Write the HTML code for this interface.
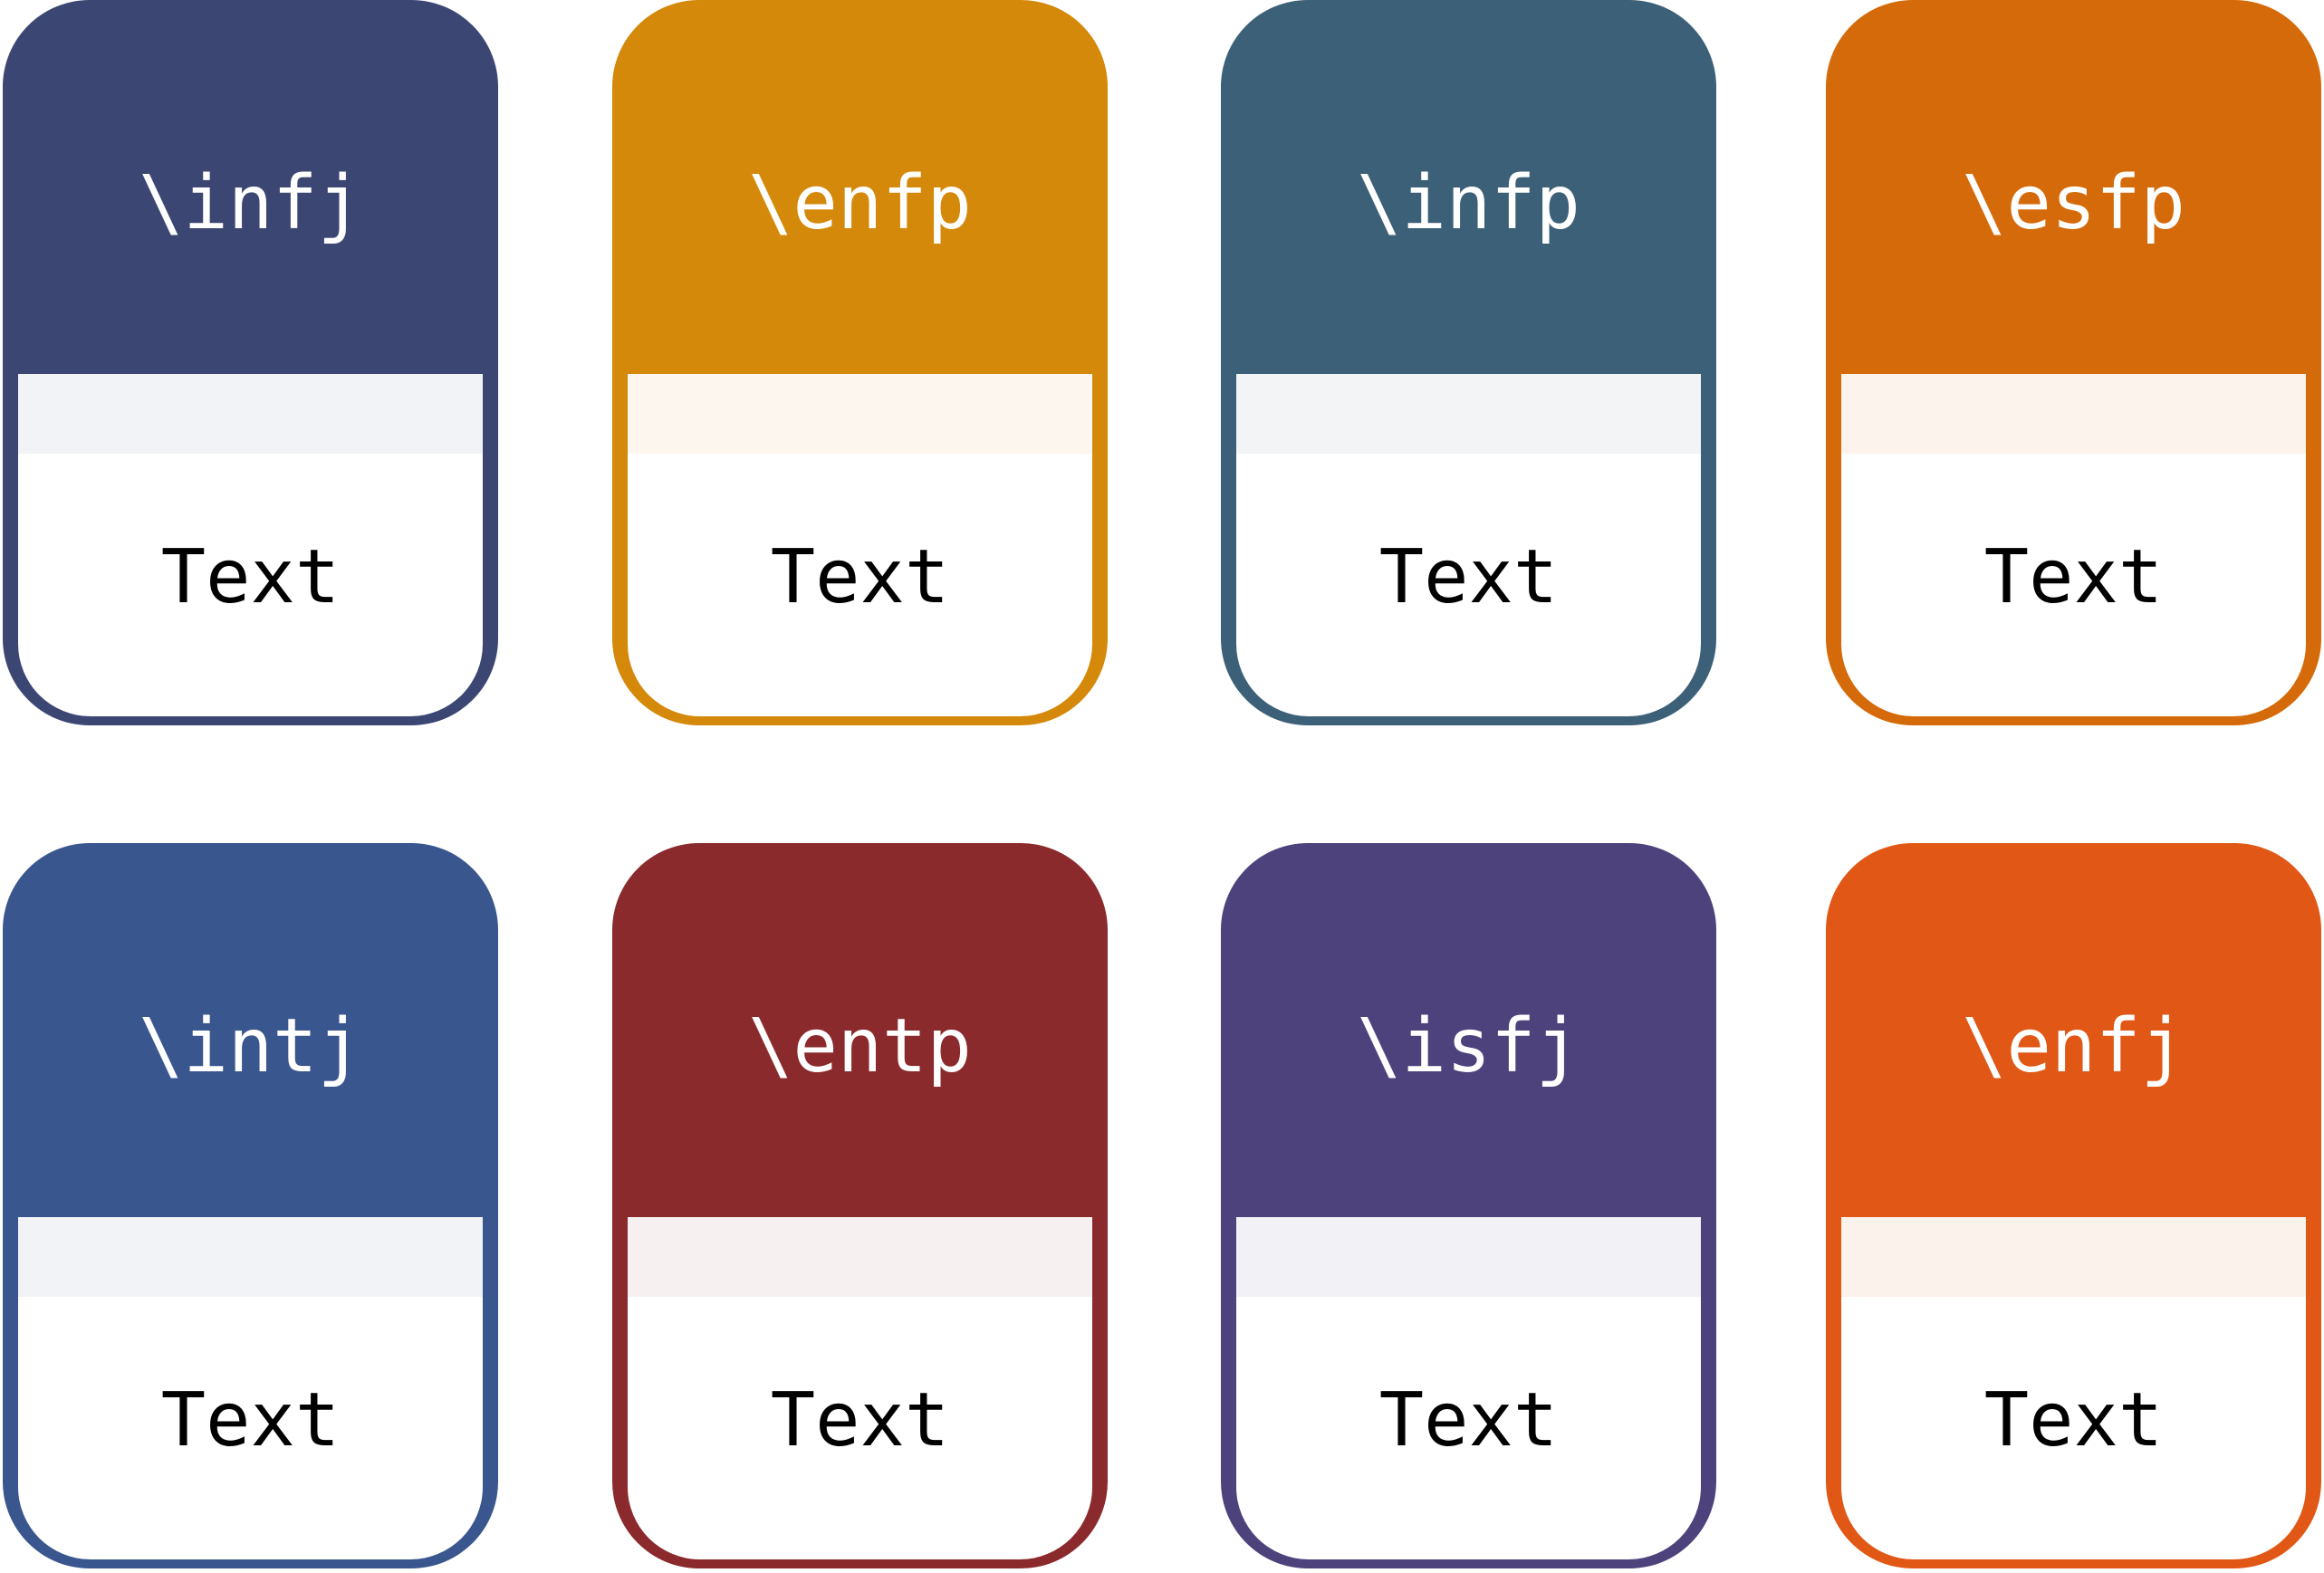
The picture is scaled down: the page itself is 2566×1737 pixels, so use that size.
<!DOCTYPE html>
<html><head><style>
body{margin:0;width:2566px;height:1737px;background:#fff;position:relative;overflow:hidden}
.c{position:absolute;width:547px;height:801px;border-radius:96px}
.h{position:absolute;left:0;right:0;top:0;height:254px;text-align:center;font-family:"DejaVu Sans Mono","Liberation Mono",monospace;font-size:82px;color:#fff}
.h span{position:absolute;left:0;right:0;bottom:-12px;line-height:1;}
.w{position:absolute;left:17px;right:17px;top:413px;bottom:10px;background:#fff;border-radius:0 0 80px 80px;overflow:hidden}
.b{height:88px}
.t{position:absolute;left:0;right:0;top:184px;text-align:center;font-family:"DejaVu Sans Mono","Liberation Mono",monospace;font-size:82px;color:#000;line-height:1}
</style></head><body>
<div class="c" style="left:3px;top:0;background:#3c4673"><div class="h"><span>\infj</span></div><div class="w"><div class="b" style="background:#f2f3f6"></div><div class="t">Text</div></div></div>
<div class="c" style="left:676px;top:0;background:#d4890a"><div class="h"><span>\enfp</span></div><div class="w"><div class="b" style="background:#fcf6ee"></div><div class="t">Text</div></div></div>
<div class="c" style="left:1348px;top:0;background:#3c6078"><div class="h"><span>\infp</span></div><div class="w"><div class="b" style="background:#f3f4f6"></div><div class="t">Text</div></div></div>
<div class="c" style="left:2016px;top:0;background:#d56a0a"><div class="h"><span>\esfp</span></div><div class="w"><div class="b" style="background:#fcf3ec"></div><div class="t">Text</div></div></div>
<div class="c" style="left:3px;top:931px;background:#3a568e"><div class="h"><span>\intj</span></div><div class="w"><div class="b" style="background:#f2f3f7"></div><div class="t">Text</div></div></div>
<div class="c" style="left:676px;top:931px;background:#8b2a2c"><div class="h"><span>\entp</span></div><div class="w"><div class="b" style="background:#f7f0f0"></div><div class="t">Text</div></div></div>
<div class="c" style="left:1348px;top:931px;background:#4d427b"><div class="h"><span>\isfj</span></div><div class="w"><div class="b" style="background:#f2f1f6"></div><div class="t">Text</div></div></div>
<div class="c" style="left:2016px;top:931px;background:#e05716"><div class="h"><span>\enfj</span></div><div class="w"><div class="b" style="background:#fcf2ec"></div><div class="t">Text</div></div></div>
</body></html>
